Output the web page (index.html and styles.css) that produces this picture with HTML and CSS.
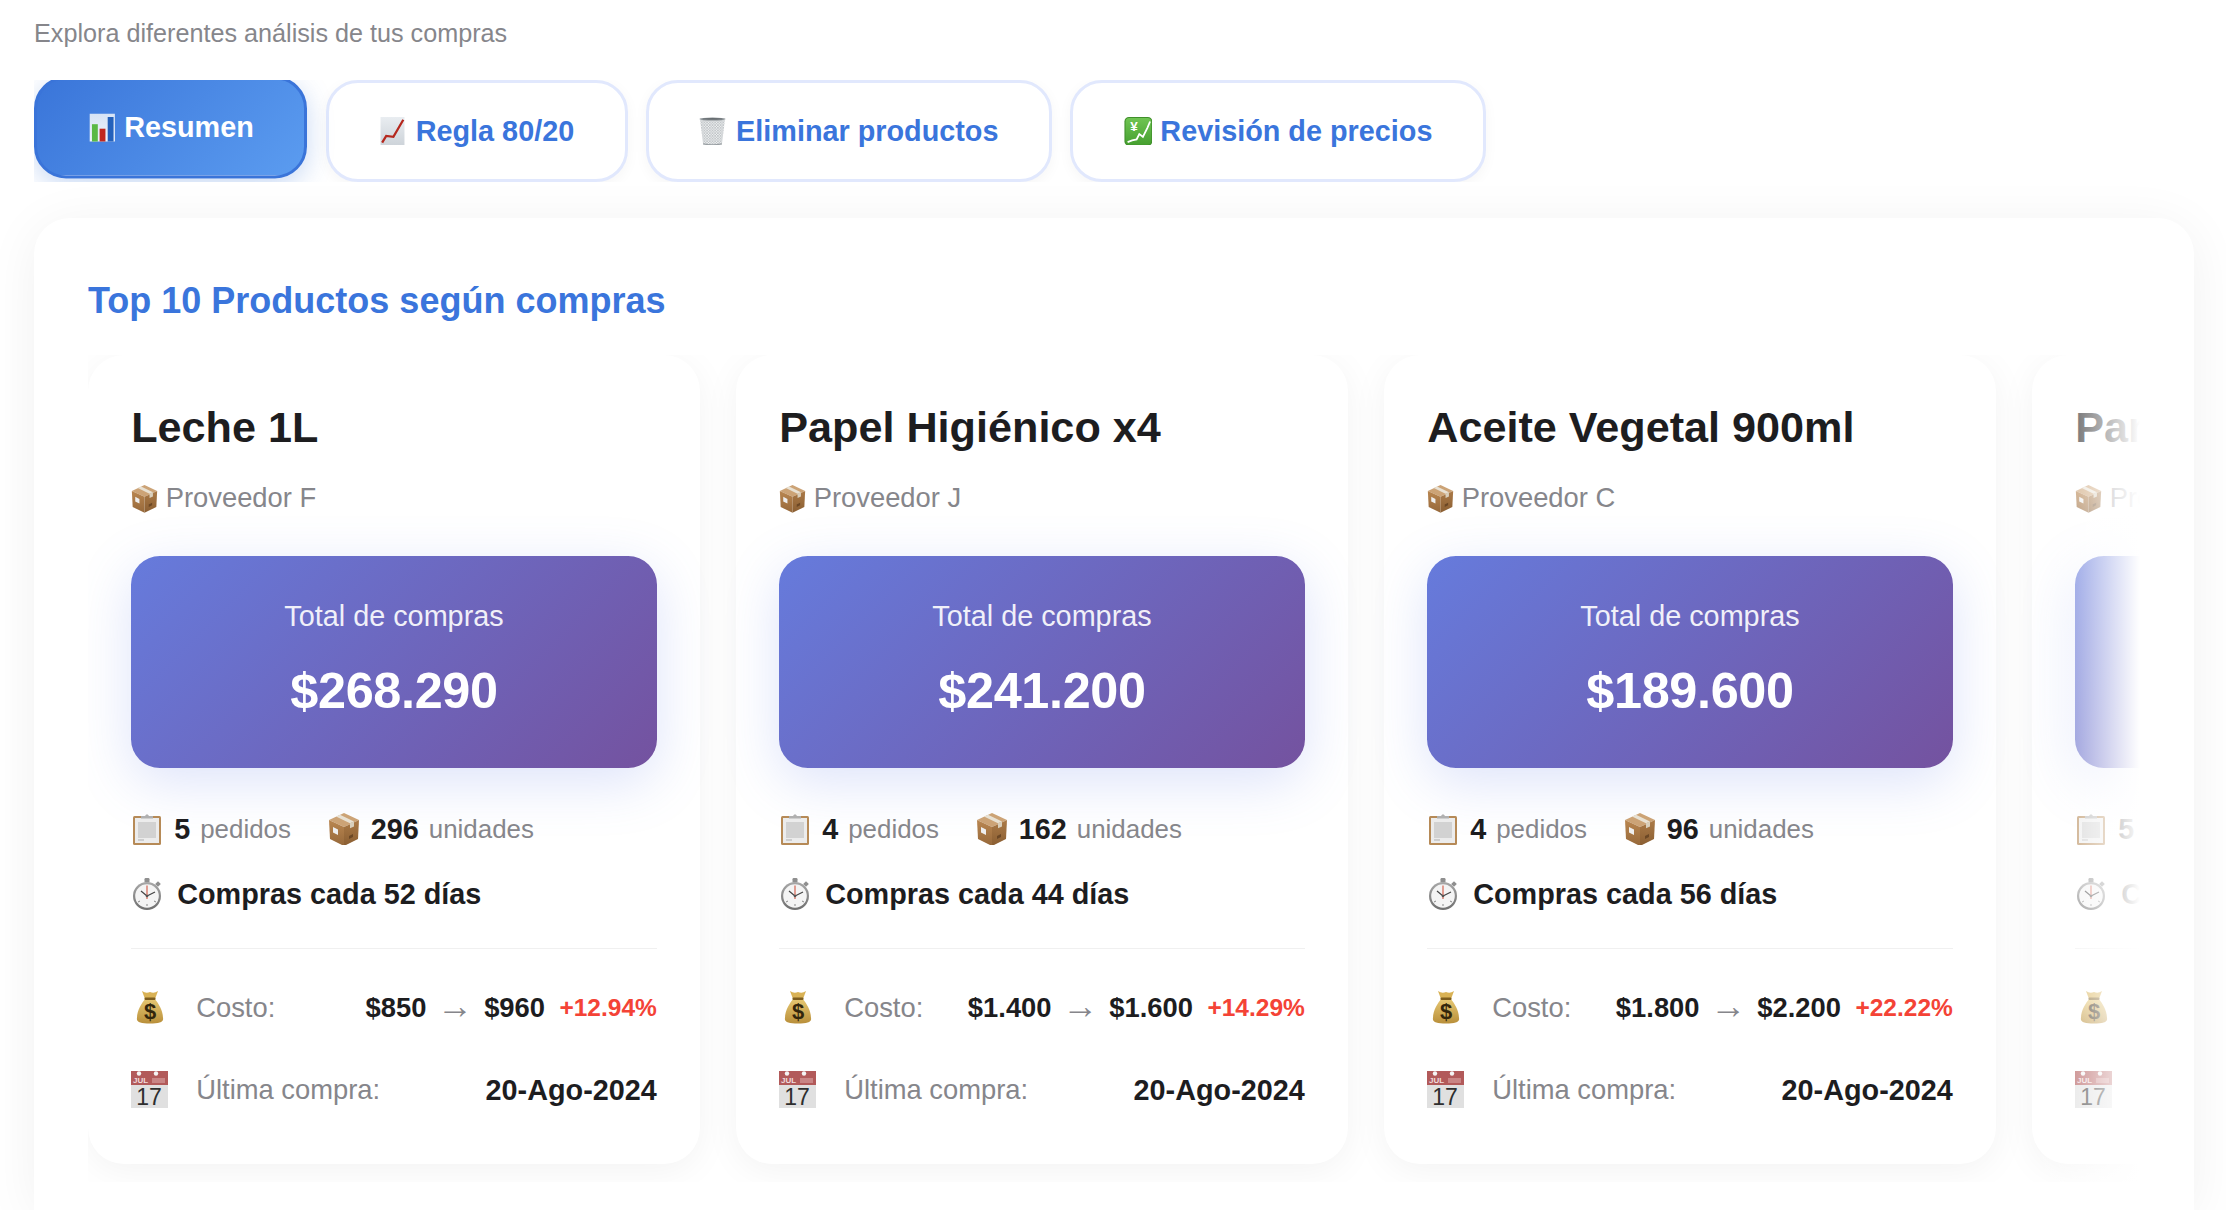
FILE: index.html
```html
<!DOCTYPE html>
<html lang="es">
<head>
<meta charset="utf-8">
<title>Análisis de compras</title>
<link rel="stylesheet" href="styles.css">
</head>
<body>
<svg class="defs" aria-hidden="true">
  <defs>
    <linearGradient id="boxL" x1="0" y1="0" x2="0" y2="1"><stop offset="0" stop-color="#b98650"/><stop offset="1" stop-color="#96683a"/></linearGradient>
    <linearGradient id="boxR" x1="0" y1="0" x2="0" y2="1"><stop offset="0" stop-color="#ab7a47"/><stop offset="1" stop-color="#8a5e32"/></linearGradient>
    <linearGradient id="bag" x1="0" y1="0" x2="0" y2="1"><stop offset="0" stop-color="#e6c772"/><stop offset="1" stop-color="#b98f3a"/></linearGradient>
    <linearGradient id="yen" x1="0" y1="0" x2="0" y2="1"><stop offset="0" stop-color="#6fc452"/><stop offset="1" stop-color="#46a030"/></linearGradient>
    <linearGradient id="paper" x1="0" y1="0" x2="0" y2="1"><stop offset="0" stop-color="#e9edf1"/><stop offset="1" stop-color="#cdd3d9"/></linearGradient>
    <linearGradient id="chartPaper" x1="0" y1="0" x2="0" y2="1"><stop offset="0" stop-color="#d5e2f5"/><stop offset="1" stop-color="#f0f5fc"/></linearGradient>
    <linearGradient id="rim" x1="0" y1="0" x2="0" y2="1"><stop offset="0" stop-color="#a8a8a8"/><stop offset="1" stop-color="#6f6f6f"/></linearGradient>
    <pattern id="mesh" width="3" height="3" patternUnits="userSpaceOnUse"><rect width="3" height="3" fill="#eef0f1"/><path d="M0 0 L3 3 M3 0 L0 3" stroke="#a2a7ab" stroke-width=".55"/></pattern>

    <symbol id="i-bars" viewBox="0 0 32 32">
      <rect x="3" y="-1" width="28" height="33" fill="url(#chartPaper)"/>
      <rect x="5.500" y="12" width="6.500" height="20" fill="#5ab945"/>
      <rect x="14" y="17" width="6.500" height="15" fill="#c0281e"/>
      <rect x="23" y="4" width="6.500" height="28" fill="#2461bb"/>
    </symbol>
    <symbol id="i-chart" viewBox="0 0 32 32">
      <rect x="1.700" y="0" width="26.600" height="32" fill="url(#paper)"/>
      <path d="M3.500 28.500 L8 21 L16 22 L27 3" fill="none" stroke="#b5281e" stroke-width="2.500"/>
    </symbol>
    <symbol id="i-trash" viewBox="0 0 32 32">
      <path d="M1 2 H29 L25.500 30 Q15 32 4.500 30 Z" fill="url(#mesh)"/>
      <ellipse cx="15" cy="2.300" rx="14.500" ry="1.700" fill="#8a9094"/>
      <ellipse cx="15" cy="2.100" rx="11" ry=".7" fill="#5a6064"/>
      <path d="M4.500 29.800 Q15 32 25.500 29.800" fill="none" stroke="#9aa0a4" stroke-width="1.400"/>
    </symbol>
    <symbol id="i-yen" viewBox="0 0 32 32">
      <rect x=".5" y="0" width="31" height="32" rx="5" fill="#3f8f2a"/>
      <rect x="1.700" y="1.200" width="28.600" height="29.600" rx="4" fill="url(#yen)"/>
      <text class="svg-yen" x="11" y="16">¥</text>
      <path d="M4 28 L9 26 L14 25 L17 19 L21 22 L26 12 L29 5" fill="none" stroke="#fff" stroke-width="2"/>
    </symbol>
    <symbol id="i-box" viewBox="0 0 32 32">
      <path d="M16 0 L31 7 L16 14 L1 7 Z" fill="#cca376"/>
      <path d="M1 7 L16 14 V33 L2 26 Z" fill="url(#boxL)"/>
      <path d="M31 7 L16 14 V33 L30 26 Z" fill="url(#boxR)"/>
      <path d="M8 3.500 L22 10.300 L26 8.500 L12 1.700 Z" fill="#e8e1d3"/>
      <path d="M22 10.300 L26 8.500 V13.500 L22 15.300 Z" fill="#d9cfbc"/>
      <path d="M5 14 L10 16.500 V22 L5 19.500 Z" fill="#eee"/>
      <path d="M21 23 L25 21 V24 L21 26 Z" fill="#6b4725"/>
    </symbol>
    <symbol id="i-clip" viewBox="0 0 32 32">
      <rect x="2" y="3" width="28" height="29" rx="1.500" fill="#b68a57"/>
      <rect x="4" y="5" width="24" height="25" fill="#ececec"/>
      <rect x="7" y="9" width="18" height="16" fill="#d2d2d2"/>
      <rect x="7" y="26.500" width="6" height="1" fill="#aeaeae"/>
      <path d="M10 5.500 V3 H14 Q16 -.5 18 3 H22 V5.500 Z" fill="#b0b0b0"/>
    </symbol>
    <symbol id="i-watch" viewBox="0 0 32 32">
      <rect x="13.500" y="0" width="5" height="4.500" rx="1.200" fill="#8f8f8f"/>
      <rect x="25" y="4" width="4" height="4" fill="#8f8f8f" transform="rotate(45 27 6)"/>
      <circle cx="16" cy="18" r="14" fill="url(#rim)"/>
      <circle cx="16" cy="18" r="11.800" fill="#f4f4f4"/>
      <path d="M16 7.500 V21" stroke="#d3624f" stroke-width="1.200"/>
      <path d="M16 18 L24 14 M16 18 L10 13" stroke="#444" stroke-width="1.200"/>
      <circle cx="16" cy="18" r="1.300" fill="#555"/>
      <path d="M7 24 L9 23 M25 24 L23 23 M16 28 V26" stroke="#888" stroke-width="1"/>
    </symbol>
    <symbol id="i-bag" viewBox="0 0 37 37">
      <path d="M11 2 Q15 5 19 3 Q23 5 27 2 L24 10 H14 Z" fill="#d9b255"/>
      <path d="M14 10 H24 C27 14 32 21 32 29 C33 33 28 34.500 19 34.500 C10 34.500 5 33 6 29 C6 21 11 14 14 10 Z" fill="url(#bag)"/>
      <rect x="13.500" y="8.500" width="11" height="2.500" rx="1" fill="#7d5d1e"/>
      <text class="svg-dollar" x="19" y="30">$</text>
    </symbol>
    <symbol id="i-cal" viewBox="0 0 37 37">
      <rect x="0" y="14" width="37" height="23" fill="#e0e0e0"/>
      <rect x="0" y="0" width="37" height="14" fill="#b25a5a"/>
      <circle cx="8" cy="2.500" r="2.200" fill="#f4f4f4"/>
      <circle cx="25" cy="2.500" r="2.200" fill="#f4f4f4"/>
      <text class="svg-jul" x="2" y="12">JUL</text>
      <rect x="21" y="7" width="13" height="5" fill="#c98585"/>
      <text class="svg-day" x="18" y="33.500">17</text>
    </symbol>
  </defs>
</svg>

<p class="subtitle">Explora diferentes análisis de tus compras</p>

<nav class="tabs">
  <button class="tab tab-active"><svg class="tab-icon"><use href="#i-bars"/></svg>Resumen</button>
  <button class="tab"><svg class="tab-icon"><use href="#i-chart"/></svg>Regla 80/20</button>
  <button class="tab"><svg class="tab-icon"><use href="#i-trash"/></svg>Eliminar productos</button>
  <button class="tab"><svg class="tab-icon"><use href="#i-yen"/></svg>Revisión de precios</button>
</nav>

<main class="panel">
  <h2 class="panel-title">Top 10 Productos según compras</h2>
  <div class="carousel">
    <div class="track">

      <article class="card">
        <h3 class="name">Leche 1L</h3>
        <div class="supplier"><svg class="sup-icon"><use href="#i-box"/></svg>Proveedor F</div>
        <div class="total"><div class="total-label">Total de compras</div><div class="total-value">$268.290</div></div>
        <div class="stats">
          <span class="stat"><svg class="stat-icon"><use href="#i-clip"/></svg><b>5</b><span class="unit">pedidos</span></span>
          <span class="stat"><svg class="stat-icon"><use href="#i-box"/></svg><b>296</b><span class="unit">unidades</span></span>
        </div>
        <div class="freq"><svg class="stat-icon"><use href="#i-watch"/></svg>Compras cada 52 días</div>
        <div class="row row-cost">
          <svg class="row-icon"><use href="#i-bag"/></svg><span class="label">Costo:</span>
          <span class="values"><b>$850</b><span class="arrow">→</span><b>$960</b><b class="pct">+12.94%</b></span>
        </div>
        <div class="row">
          <svg class="row-icon"><use href="#i-cal"/></svg><span class="label">Última compra:</span>
          <b class="date">20-Ago-2024</b>
        </div>
      </article>

      <article class="card">
        <h3 class="name">Papel Higiénico x4</h3>
        <div class="supplier"><svg class="sup-icon"><use href="#i-box"/></svg>Proveedor J</div>
        <div class="total"><div class="total-label">Total de compras</div><div class="total-value">$241.200</div></div>
        <div class="stats">
          <span class="stat"><svg class="stat-icon"><use href="#i-clip"/></svg><b>4</b><span class="unit">pedidos</span></span>
          <span class="stat"><svg class="stat-icon"><use href="#i-box"/></svg><b>162</b><span class="unit">unidades</span></span>
        </div>
        <div class="freq"><svg class="stat-icon"><use href="#i-watch"/></svg>Compras cada 44 días</div>
        <div class="row row-cost">
          <svg class="row-icon"><use href="#i-bag"/></svg><span class="label">Costo:</span>
          <span class="values"><b>$1.400</b><span class="arrow">→</span><b>$1.600</b><b class="pct">+14.29%</b></span>
        </div>
        <div class="row">
          <svg class="row-icon"><use href="#i-cal"/></svg><span class="label">Última compra:</span>
          <b class="date">20-Ago-2024</b>
        </div>
      </article>

      <article class="card">
        <h3 class="name">Aceite Vegetal 900ml</h3>
        <div class="supplier"><svg class="sup-icon"><use href="#i-box"/></svg>Proveedor C</div>
        <div class="total"><div class="total-label">Total de compras</div><div class="total-value">$189.600</div></div>
        <div class="stats">
          <span class="stat"><svg class="stat-icon"><use href="#i-clip"/></svg><b>4</b><span class="unit">pedidos</span></span>
          <span class="stat"><svg class="stat-icon"><use href="#i-box"/></svg><b>96</b><span class="unit">unidades</span></span>
        </div>
        <div class="freq"><svg class="stat-icon"><use href="#i-watch"/></svg>Compras cada 56 días</div>
        <div class="row row-cost">
          <svg class="row-icon"><use href="#i-bag"/></svg><span class="label">Costo:</span>
          <span class="values"><b>$1.800</b><span class="arrow">→</span><b>$2.200</b><b class="pct">+22.22%</b></span>
        </div>
        <div class="row">
          <svg class="row-icon"><use href="#i-cal"/></svg><span class="label">Última compra:</span>
          <b class="date">20-Ago-2024</b>
        </div>
      </article>

      <article class="card">
        <h3 class="name">Pan Molde</h3>
        <div class="supplier"><svg class="sup-icon"><use href="#i-box"/></svg>Proveedor A</div>
        <div class="total"><div class="total-label">Total de compras</div><div class="total-value">$156.000</div></div>
        <div class="stats">
          <span class="stat"><svg class="stat-icon"><use href="#i-clip"/></svg><b>5</b><span class="unit">pedidos</span></span>
          <span class="stat"><svg class="stat-icon"><use href="#i-box"/></svg><b>120</b><span class="unit">unidades</span></span>
        </div>
        <div class="freq"><svg class="stat-icon"><use href="#i-watch"/></svg>Compras cada 40 días</div>
        <div class="row row-cost">
          <svg class="row-icon"><use href="#i-bag"/></svg><span class="label">Costo:</span>
          <span class="values"><b>$1.200</b><span class="arrow">→</span><b>$1.300</b><b class="pct">+8.33%</b></span>
        </div>
        <div class="row">
          <svg class="row-icon"><use href="#i-cal"/></svg><span class="label">Última compra:</span>
          <b class="date">20-Ago-2024</b>
        </div>
      </article>

    </div>
    <div class="fade"></div>
  </div>
</main>
</body>
</html>
```

FILE: styles.css
```css
* { box-sizing: border-box; }

html, body { height: 100%; overflow: hidden; }

body {
  margin: 0;
  padding: 18px 32px 0 34px;
  background: #fff;
  color: #1d1d1f;
  font-family: "Liberation Sans", Arial, sans-serif;
}

.defs { position: absolute; width: 0; height: 0; }

.svg-yen { font: 700 15px "Liberation Sans", sans-serif; fill: #fff; text-anchor: middle; }
.svg-dollar { font: 700 22px "Liberation Sans", sans-serif; fill: #33260c; text-anchor: middle; }
.svg-jul { font: 700 8px "Liberation Sans", sans-serif; fill: #f0dcdc; }
.svg-day { font: 400 23px "Liberation Sans", sans-serif; fill: #2e2e2e; text-anchor: middle; }

.subtitle {
  margin: 0 0 32px;
  height: 30px;
  font-size: 25.2px;
  line-height: 30px;
  color: #86868b;
}

.tabs {
  display: flex;
  gap: 18.3px;
  height: 102px;
  margin-bottom: 36px;
  overflow: hidden;
}

.tab {
  display: flex;
  align-items: center;
  flex: none;
  height: 102px;
  padding: 0 50.4px;
  border: 3.6px solid #e1e8fd;
  border-radius: 32px;
  background: #fff;
  box-shadow: 0 3.6px 14px rgba(0, 0, 0, .04);
  color: #3a75dc;
  font-family: inherit;
  font-size: 28.8px;
  font-weight: 700;
}

.tab-active {
  transform: translateY(-3.6px);
  border-color: #3a74d9;
  background: linear-gradient(135deg, #3a75d9, #5b9cf0);
  box-shadow: 0 7px 27px rgba(58, 117, 217, .28);
  color: #fff;
}

.tab-icon { flex: none; width: 28.8px; height: 28.8px; margin-right: 8px; }

.panel {
  height: 992px;
  padding: 54px 54px 0;
  border-radius: 36px 36px 0 0;
  background: #fff;
  box-shadow: 0 7px 54px rgba(0, 0, 0, .06);
}

.panel-title {
  margin: 0 0 25px;
  font-size: 36px;
  line-height: 58px;
  font-weight: 700;
  color: #3a75dc;
}

.carousel { position: relative; }

.track {
  display: flex;
  gap: 36px;
  padding-bottom: 18px;
  overflow: hidden;
}

.fade {
  position: absolute;
  top: 0;
  right: 0;
  bottom: 0;
  width: 108px;
  background: linear-gradient(to right, rgba(255, 255, 255, 0), #fff);
}

.card {
  flex: 0 0 612px;
  height: 809px;
  padding: 43.2px 43.2px 0;
  border-radius: 36px;
  background: #fff;
  box-shadow: 0 7px 36px rgba(0, 0, 0, .05);
}

.name {
  margin: 0 0 24px;
  font-size: 43.2px;
  line-height: 58px;
  font-weight: 700;
  white-space: nowrap;
}

.supplier {
  display: flex;
  align-items: center;
  gap: 7.5px;
  height: 36px;
  font-size: 27.36px;
  color: #86868b;
  white-space: nowrap;
}

.sup-icon { flex: none; width: 27px; height: 29px; }

.total {
  height: 212px;
  margin-top: 40px;
  padding-top: 43px;
  border-radius: 28.8px;
  background: linear-gradient(135deg, #667bdc, #74529f);
  box-shadow: 0 14px 54px rgba(102, 126, 234, .22);
  color: #fff;
  text-align: center;
}

.total-label { font-size: 28.8px; line-height: 34px; opacity: .9; }

.total-value {
  margin-top: 28.4px;
  font-size: 50.4px;
  line-height: 58px;
  font-weight: 700;
  letter-spacing: -.35px;
}

.stats {
  display: flex;
  gap: 36.8px;
  height: 36px;
  margin-top: 43px;
  white-space: nowrap;
}

.stat { display: flex; align-items: center; }

.stat b { font-size: 28.8px; margin-left: 11px; }

.unit { margin-left: 10px; font-size: 25.92px; color: #86868b; }

.stat-icon { flex: none; width: 32px; height: 32px; }

.freq {
  display: flex;
  align-items: center;
  gap: 14px;
  height: 36px;
  margin-top: 29px;
  font-size: 28.8px;
  font-weight: 700;
  white-space: nowrap;
}

.row {
  display: flex;
  align-items: center;
  height: 38px;
  margin-top: 44px;
  white-space: nowrap;
}

.row-cost {
  margin-top: 36px;
  padding-top: 40px;
  height: 79px;
  border-top: 1.8px solid #f0f0f0;
}

.row-icon { flex: none; width: 37px; height: 37px; margin: 0 28px 2px 0; }

.label { font-size: 27.36px; color: #86868b; }

.values {
  display: flex;
  align-items: center;
  gap: 14.4px;
  margin-left: auto;
  font-size: 27.36px;
}

.arrow {
  margin: 0 -3.5px;
  padding-bottom: 5px;
  font-size: 36px;
  line-height: 36px;
  color: #86868b;
}

.pct { font-size: 24.5px; color: #f44336; }

.date { margin-left: auto; font-size: 28.8px; }
```
